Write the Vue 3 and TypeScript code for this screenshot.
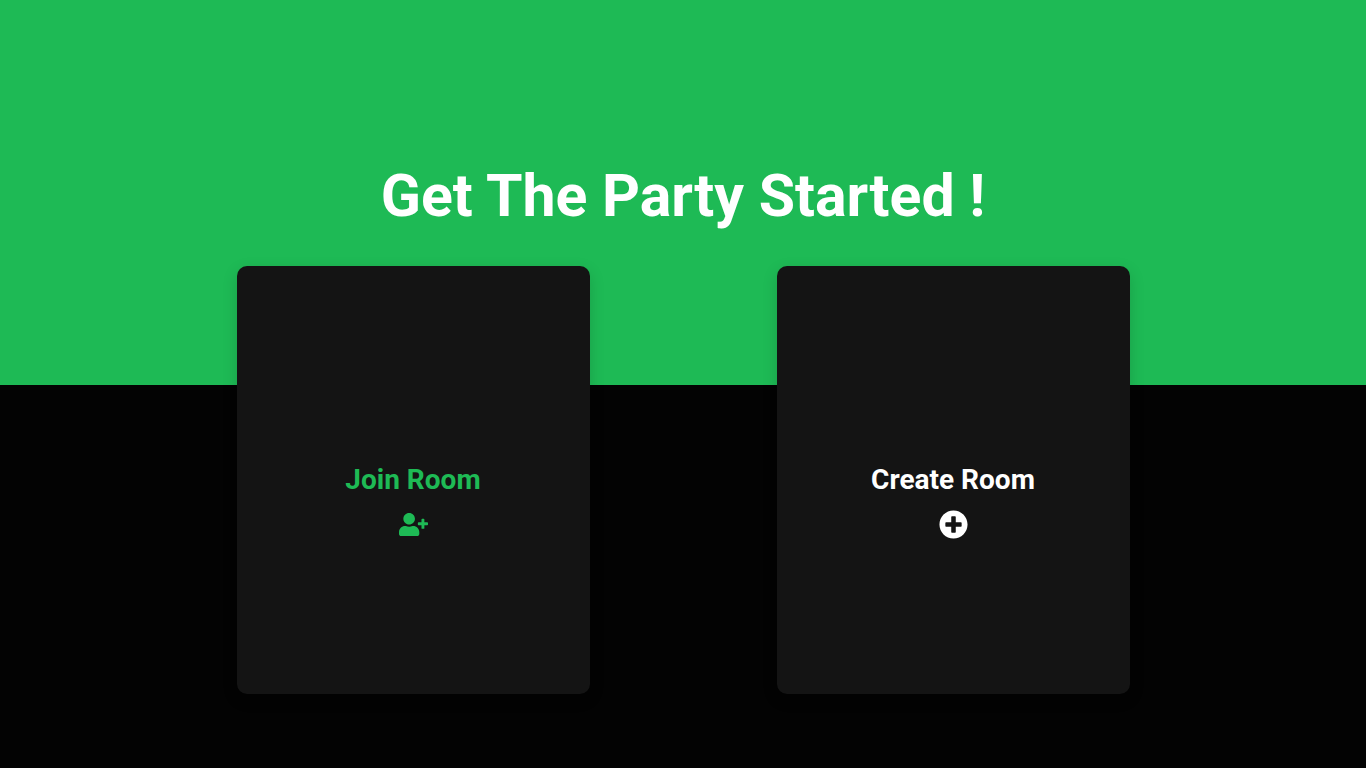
<script setup lang="ts">
interface RoomAction {
  id: string
  label: string
  viewBox: string
  path: string
}

const actions: RoomAction[] = [
  {
    id: 'join',
    label: 'Join Room',
    viewBox: '0 0 640 512',
    path: 'M624 208h-64v-64c0-8.800-7.200-16-16-16h-32c-8.800 0-16 7.200-16 16v64h-64c-8.800 0-16 7.200-16 16v32c0 8.800 7.200 16 16 16h64v64c0 8.800 7.200 16 16 16h32c8.800 0 16-7.200 16-16v-64h64c8.800 0 16-7.200 16-16v-32c0-8.800-7.200-16-16-16zm-400 48c70.700 0 128-57.300 128-128S294.700 0 224 0 96 57.300 96 128s57.300 128 128 128zm89.600 32h-16.700c-22.200 10.200-46.900 16-72.900 16s-50.600-5.800-72.900-16h-16.700C60.200 288 0 348.200 0 422.400V464c0 26.500 21.500 48 48 48h352c26.500 0 48-21.500 48-48v-41.600c0-74.200-60.200-134.400-134.400-134.400z',
  },
  {
    id: 'create',
    label: 'Create Room',
    viewBox: '0 0 512 512',
    path: 'M256 8C119 8 8 119 8 256s111 248 248 248 248-111 248-248S393 8 256 8zm144 276c0 6.600-5.400 12-12 12h-92v92c0 6.600-5.400 12-12 12h-56c-6.600 0-12-5.400-12-12v-92h-92c-6.600 0-12-5.400-12-12v-56c0-6.600 5.400-12 12-12h92v-92c0-6.600 5.400-12 12-12h56c6.600 0 12 5.400 12 12v92h92c6.600 0 12 5.400 12 12v56z',
  },
]
</script>

<template>
  <main class="page">
    <h1 class="title">Get The Party Started !</h1>
    <div class="cards">
      <button v-for="action in actions" :key="action.id" type="button" class="card" :class="action.id">
        <span class="label">{{ action.label }}</span>
        <svg class="icon" :viewBox="action.viewBox" fill="currentColor" aria-hidden="true">
          <path :d="action.path" />
        </svg>
      </button>
    </div>
  </main>
</template>

<style>
body {
  margin: 0;
  background: #030303;
}
</style>

<style scoped>
.page {
  box-sizing: border-box;
  min-height: 100vh;
  padding: 160px 24px 74px;
  display: flex;
  flex-direction: column;
  align-items: center;
  background: linear-gradient(#1eba55 385px, #030303 385px);
  font-family: Roboto, "Liberation Sans", sans-serif;
}

.title {
  margin: 0 0 34px;
  font-size: 59px;
  line-height: 72px;
  font-weight: 700;
  color: #fff;
  text-align: center;
}

.cards {
  width: 100%;
  max-width: 893px;
  flex: 1;
  display: flex;
  justify-content: space-between;
  gap: 24px;
}

.card {
  flex: 0 1 353px;
  min-height: 428px;
  padding: 42px 0 0;
  border: 0;
  border-radius: 10px;
  display: flex;
  flex-direction: column;
  align-items: center;
  justify-content: center;
  gap: 13px;
  background: #141414;
  box-shadow: 0 5px 15px rgba(0, 0, 0, 0.15);
  font: inherit;
  color: #fff;
  cursor: pointer;
}

.card.join {
  color: #1eba55;
}

.label {
  font-size: 28px;
  line-height: 34px;
  font-weight: 700;
}

.icon {
  width: 29px;
  height: 29px;
}
</style>
